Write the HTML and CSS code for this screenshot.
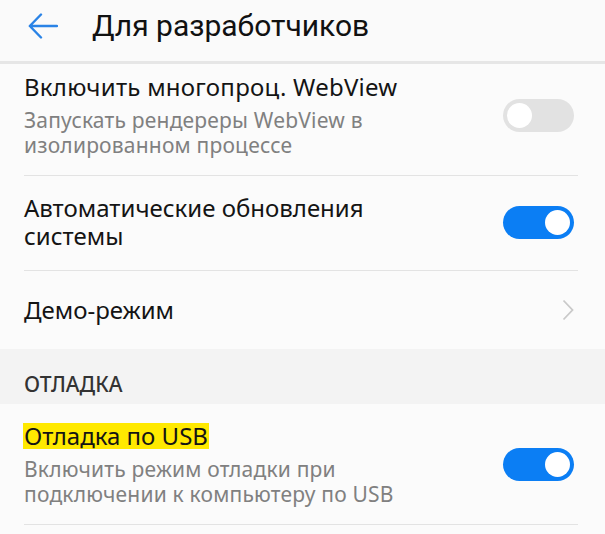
FILE: index.html
```html
<!DOCTYPE html>
<html lang="ru">
<head>
<meta charset="utf-8">
<title>Для разработчиков</title>
<link rel="stylesheet" href="styles.css">
</head>
<body>
<div class="screen">
  <header class="appbar">
    <svg class="back" width="30" height="26" viewBox="0 0 30 26" aria-hidden="true">
      <path d="M29 13 H2 M13 1.5 L1.8 13 L13 24.5" fill="none" stroke="#2a83e6" stroke-width="2.4" stroke-linecap="round" stroke-linejoin="round"/>
    </svg>
    <h1 class="title">Для разработчиков</h1>
  </header>
  <div class="shadow"></div>
  <main class="viewport">
    <div class="row row-first">
      <div class="text">
        <div class="label">Включить многопроц. WebView</div>
        <div class="desc">
          <div class="line">Запускать рендереры WebView в</div>
          <div class="line">изолированном процессе</div>
        </div>
      </div>
      <span class="switch"><span class="knob"></span></span>
    </div>
    <div class="row row-two">
      <div class="text">
        <div class="label">
          <div class="line">Автоматические обновления</div>
          <div class="line">системы</div>
        </div>
      </div>
      <span class="switch on"><span class="knob"></span></span>
    </div>
    <div class="row row-link">
      <div class="text">
        <div class="label">Демо-режим</div>
      </div>
      <svg class="chev" width="12" height="22" viewBox="0 0 12 22" aria-hidden="true">
        <path d="M1.5 1.5 L10.5 11 L1.5 20.5" fill="none" stroke="#c9c9c9" stroke-width="1.8"/>
      </svg>
    </div>
    <div class="section">ОТЛАДКА</div>
    <div class="row row-usb">
      <div class="text">
        <div class="label"><span class="mark">Отладка по USB</span></div>
        <div class="desc">
          <div class="line">Включить режим отладки при</div>
          <div class="line">подключении к компьютеру по USB</div>
        </div>
      </div>
      <span class="switch on"><span class="knob"></span></span>
    </div>
  </main>
</div>
</body>
</html>
```
FILE: styles.css
```css
html, body {
  margin: 0;
  padding: 0;
  background: #fafafa;
}
body {
  font-family: Roboto, "Noto Sans", "Liberation Sans", sans-serif;
  color: #141414;
}
.screen {
  width: 605px;
  height: 534px;
  display: flex;
  flex-direction: column;
  overflow: hidden;
  background: #fafafa;
}
.appbar {
  height: 61px;
  flex: none;
  display: flex;
  align-items: center;
  padding-left: 28px;
  box-sizing: border-box;
  background: #fafafa;
  position: relative;
  z-index: 2;
}
.back {
  display: block;
  margin-top: -10px;
}
.title {
  margin: -9px 0 0 34px;
  font-size: 30px;
  font-weight: 400;
  color: #111;
  line-height: 36px;
}
.shadow {
  height: 3px;
  flex: none;
  background: #e6e6e6;
  position: relative;
  z-index: 2;
}
.viewport {
  flex: 1;
  overflow: hidden;
  background: #fbfbfb;
  font-family: "Noto Sans", Roboto, "Liberation Sans", sans-serif;
}
.row {
  display: flex;
  align-items: center;
  margin: 0 27px 0 24px;
  padding-right: 4px;
  border-bottom: 1px solid #e3e3e3;
  box-sizing: border-box;
}
.row-first {
  margin-top: -9px;
  padding-top: 18px;
  padding-bottom: 17px;
}
.row-first .label {
  letter-spacing: 0.25px;
}
.row-two {
  padding: 18px 4px 20px 0;
}
.row-link {
  height: 78px;
  border-bottom: none;
}
.row-usb {
  padding-top: 18px;
  padding-bottom: 17px;
}
.text {
  flex: 1;
}
.label {
  font-size: 24px;
  line-height: 28px;
  color: #141414;
}
.desc {
  margin-top: 7px;
  font-size: 21px;
  line-height: 25px;
  letter-spacing: 0.2px;
  color: #808080;
}
.line {
  white-space: nowrap;
}
.mark {
  display: inline-block;
  line-height: 26px;
  background: #ffe900;
  padding: 0 1px;
  margin-left: -1px;
}
.section {
  height: 55px;
  box-sizing: border-box;
  padding: 23px 24px 0;
  background: #f3f3f3;
  font-size: 21px;
  line-height: 24px;
  font-weight: 500;
  color: #333;
}
.switch {
  flex: none;
  width: 71px;
  height: 33px;
  border-radius: 17px;
  background: #e2e2e2;
  box-sizing: border-box;
  padding: 4px;
  display: flex;
  justify-content: flex-start;
}
.switch.on {
  background: #0b7ef4;
  justify-content: flex-end;
}
.knob {
  width: 25px;
  height: 25px;
  border-radius: 50%;
  background: #fff;
}
.chev {
  display: block;
}
```
